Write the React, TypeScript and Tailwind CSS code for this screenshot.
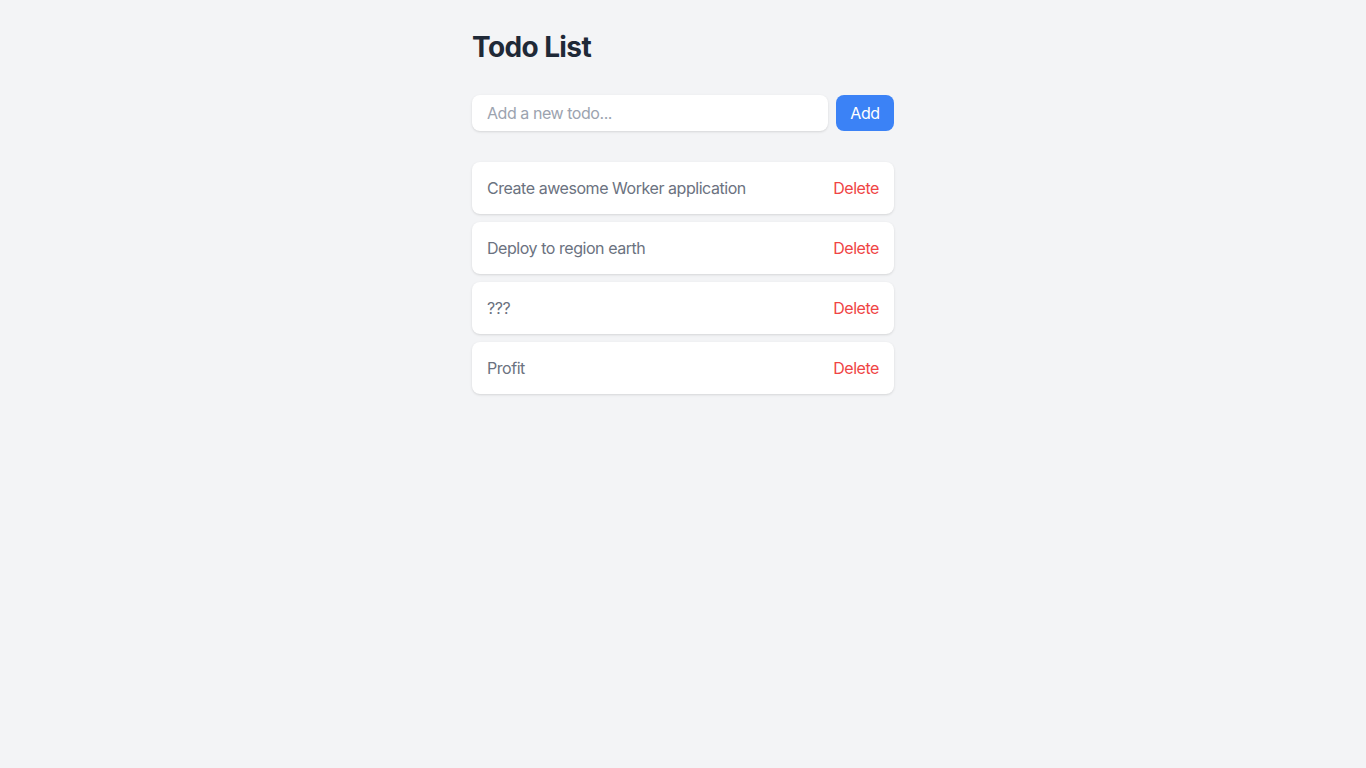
import React, { useState } from "react";

export default function App() {
  const [todos, setTodos] = useState<string[]>([
    "Create awesome Worker application",
    "Deploy to region earth",
    "???",
    "Profit",
  ]);
  const [text, setText] = useState("");

  return (
    <div
      className="min-h-screen bg-[#f3f4f6]"
      style={{ fontFamily: "Inter, 'Noto Sans', sans-serif" }}
    >
      <div className="mx-auto w-[422px] pt-[29px]">
        <h1 className="text-[28px] font-bold text-[#1f2937] tracking-[-0.6px] leading-9">Todo List</h1>
        <div className="mt-[30px] flex gap-2">
          <input
            value={text}
            onChange={(e) => setText(e.target.value)}
            placeholder="Add a new todo..."
            className="h-9 min-w-0 flex-1 rounded-lg bg-white px-[15px] text-base tracking-[-0.45px] text-[#374151] placeholder-[#9ca3af] shadow-sm outline-none"
          />
          <button
            onClick={() => {
              if (text.trim()) {
                setTodos([...todos, text.trim()]);
                setText("");
              }
            }}
            className="flex h-9 w-[58px] items-center justify-center rounded-lg bg-[#3b82f6] text-base tracking-[-0.45px] text-white"
          >
            Add
          </button>
        </div>
        <ul className="mt-[31px] flex flex-col gap-2">
          {todos.map((t, i) => (
            <li
              key={i}
              className="flex h-[52px] items-center justify-between rounded-lg bg-white px-[15px] shadow-sm"
            >
              <span className="text-base tracking-[-0.45px] text-[#6b7280]">{t}</span>
              <button
                onClick={() => setTodos(todos.filter((_, j) => j !== i))}
                className="text-base tracking-[-0.45px] text-[#ef4444]"
              >
                Delete
              </button>
            </li>
          ))}
        </ul>
      </div>
    </div>
  );
}
